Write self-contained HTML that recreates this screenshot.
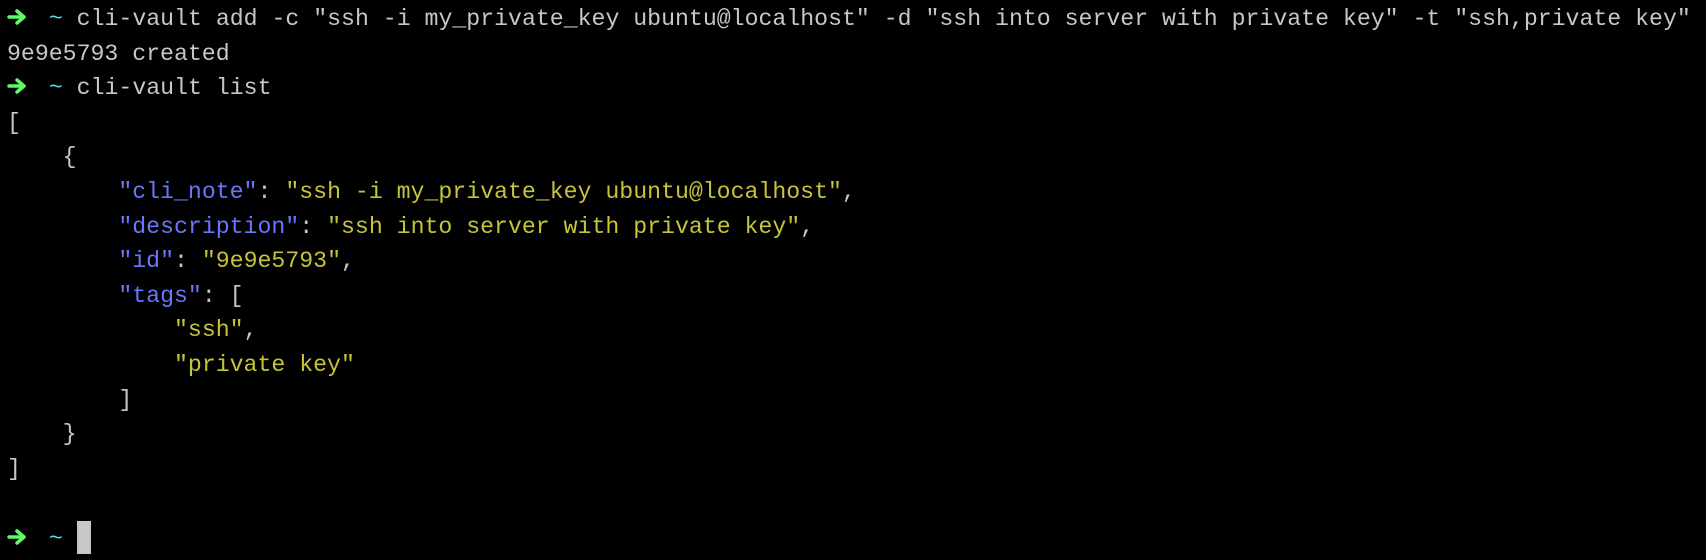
<!DOCTYPE html>
<html><head><meta charset="utf-8"><style>
html,body{margin:0;padding:0;background:#000;width:1706px;height:560px;overflow:hidden}
pre{margin:0;position:absolute;left:7px;top:2px;font-family:"Liberation Mono","DejaVu Sans Mono",monospace;font-size:23.2px;line-height:34.6px;color:#c7c7c7;white-space:pre}
.a{display:inline-block;width:20px;height:20px;margin-right:-6px;vertical-align:-2px;overflow:visible}
.t{color:#5fd7e6}
.k{color:#6a76fb}
.s{color:#c6c43a}
.c{display:inline-block;width:1ch;height:33px;background:#c7c7c7;vertical-align:-9px}
</style></head><body><pre><svg class="a" viewBox="0 0 20 20"><path d="M2 10H16M10 4L17 10L10 16" stroke="#5ff967" stroke-width="3.5" fill="none" stroke-linecap="round" stroke-linejoin="round"/></svg>  <span class="t">~</span> cli-vault add -c "ssh -i my_private_key ubuntu@localhost" -d "ssh into server with private key" -t "ssh,private key"
9e9e5793 created
<svg class="a" viewBox="0 0 20 20"><path d="M2 10H16M10 4L17 10L10 16" stroke="#5ff967" stroke-width="3.5" fill="none" stroke-linecap="round" stroke-linejoin="round"/></svg>  <span class="t">~</span> cli-vault list
[
    {
        <span class="k">"cli_note"</span>: <span class="s">"ssh -i my_private_key ubuntu@localhost"</span>,
        <span class="k">"description"</span>: <span class="s">"ssh into server with private key"</span>,
        <span class="k">"id"</span>: <span class="s">"9e9e5793"</span>,
        <span class="k">"tags"</span>: [
            <span class="s">"ssh"</span>,
            <span class="s">"private key"</span>
        ]
    }
]

<svg class="a" viewBox="0 0 20 20"><path d="M2 10H16M10 4L17 10L10 16" stroke="#5ff967" stroke-width="3.5" fill="none" stroke-linecap="round" stroke-linejoin="round"/></svg>  <span class="t">~</span> <span class="c"></span></pre></body></html>
